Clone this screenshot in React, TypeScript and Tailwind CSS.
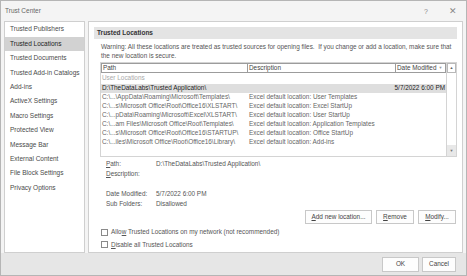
import React from 'react';

const sideItems = [
  'Trusted Publishers',
  'Trusted Locations',
  'Trusted Documents',
  'Trusted Add-in Catalogs',
  'Add-ins',
  'ActiveX Settings',
  'Macro Settings',
  'Protected View',
  'Message Bar',
  'External Content',
  'File Block Settings',
  'Privacy Options',
];

const rows = [
  { path: 'C:\\...\\AppData\\Roaming\\Microsoft\\Templates\\', desc: 'Excel default location: User Templates' },
  { path: 'C:\\...s\\Microsoft Office\\Root\\Office16\\XLSTART\\', desc: 'Excel default location: Excel StartUp' },
  { path: 'C:\\...pData\\Roaming\\Microsoft\\Excel\\XLSTART\\', desc: 'Excel default location: User StartUp' },
  { path: 'C:\\...am Files\\Microsoft Office\\Root\\Templates\\', desc: 'Excel default location: Application Templates' },
  { path: 'C:\\...s\\Microsoft Office\\Root\\Office16\\STARTUP\\', desc: 'Excel default location: Office StartUp' },
  { path: 'C:\\...iles\\Microsoft Office\\Root\\Office16\\Library\\', desc: 'Excel default location: Add-ins' },
];

function Btn({ children, w }: { children: React.ReactNode; w: string }) {
  return (
    <div className={`${w} h-[14px] shrink-0 border border-[#c8c8c8] bg-[#fdfdfd] flex items-center justify-center text-[#444] whitespace-nowrap`}>
      {children}
    </div>
  );
}

function Check({ children }: { children: React.ReactNode }) {
  return (
    <div className="flex items-center h-[12.5px] gap-[3px]">
      <div className="w-[7px] h-[7px] shrink-0 border border-[#8a8a8a] bg-white" />
      <span className="text-[#555] whitespace-nowrap">{children}</span>
    </div>
  );
}

export default function App() {
  return (
    <div
      className="w-[467px] h-[276px] bg-[#ececec] border border-[#b5b5b5] flex flex-col overflow-hidden text-[6.4px] leading-none"
      style={{ fontFamily: '"Liberation Sans", Arial, sans-serif' }}
    >
      {/* Title bar */}
      <div className="h-[20px] shrink-0 bg-[#f4f4f4] flex items-center pl-[4px] pr-[9px] text-[#666]">
        <span className="text-[6.5px] flex-1">Trust Center</span>
        <span className="text-[7px] text-[#888] mr-[21px]">?</span>
        <span className="text-[9px] text-[#888]">✕</span>
      </div>

      {/* Body */}
      <div className="flex flex-1 min-h-0 bg-[#f4f4f4] pl-[3px] pr-[3px] gap-[3px]">
        {/* Sidebar */}
        <div className="w-[81px] shrink-0 bg-white border border-[#cfcfcf] pt-[0.5px] text-[6.5px] text-[#4a4a4a]">
          {sideItems.map((s, i) => (
            <div
              key={s}
              className={`h-[14.4px] flex items-center pl-[5px] whitespace-nowrap ${i === 1 ? 'bg-[#d2d2d2] text-[#222]' : ''}`}
            >
              {s}
            </div>
          ))}
        </div>

        {/* Content */}
        <div className="flex-1 min-w-0 bg-white border border-[#cfcfcf] px-[5px] pt-[5px] flex flex-col">
          <div className="h-[12px] shrink-0 bg-[#e4e4e4] flex items-center pl-[3px] font-bold text-[6.5px] text-[#333]">
            Trusted Locations
          </div>
          <div className="pl-[7px] pt-[4px] text-[#555] leading-[8.5px] whitespace-nowrap">
            <div>Warning: All these locations are treated as trusted sources for opening files.&nbsp; If you change or add a location, make sure that</div>
            <div>the new location is secure.</div>
          </div>

          {/* List */}
          <div className="ml-[6px] mt-[2px] h-[95px] shrink-0 border border-[#d4d4d4] flex">
            <div className="flex-1 min-w-0 flex flex-col">
              <div className="h-[10px] flex text-[#444]">
                <div className="w-[147px] shrink-0 border border-[#9c9c9c] flex items-center pl-[1px]">Path</div>
                <div className="w-[148px] shrink-0 border-y border-r border-[#9c9c9c] flex items-center pl-[1px]">Description</div>
                <div className="flex-1 min-w-0 border-y border-r border-[#9c9c9c] flex items-center pl-[1px] whitespace-nowrap">
                  Date Modified <span className="ml-[2px] text-[4px] text-[#999]">▼</span>
                </div>
              </div>
              <div className="h-[11px] flex items-center pl-[1px] text-[#aaa]">User Locations</div>
              <div className="h-[9px] flex items-center bg-[#dedede] text-[#222]">
                <div className="w-[148px] shrink-0 pl-[1px] whitespace-nowrap">D:\TheDataLabs\Trusted Application\</div>
                <div className="flex-1" />
                <div className="pr-[1px] whitespace-nowrap">5/7/2022 6:00 PM</div>
              </div>
              {rows.map((r) => (
                <div key={r.path} className="h-[9px] flex items-center text-[#666]">
                  <div className="w-[148px] shrink-0 pl-[1px] whitespace-nowrap">{r.path}</div>
                  <div className="flex-1 whitespace-nowrap">{r.desc}</div>
                </div>
              ))}
            </div>
            {/* Scrollbar */}
            <div className="w-[10px] shrink-0 border-l border-[#d4d4d4] flex flex-col">
              <div className="h-[10px] border border-[#b8b8b8] flex items-center justify-center text-[4px] text-[#666]">▲</div>
              <div className="flex-1 bg-white" />
              <div className="h-[11px] bg-[#e8e8e8] flex items-center justify-center text-[4px] text-[#777]">▼</div>
            </div>
          </div>

          {/* Details */}
          <div className="pl-[12px] pt-[2px] text-[#555]">
            <div className="h-[10px] flex items-center">
              <span className="w-[50px]"><u>P</u>ath:</span>
              <span>D:\TheDataLabs\Trusted Application\</span>
            </div>
            <div className="h-[10px] flex items-center">
              <span className="w-[50px]"><u>D</u>escription:</span>
            </div>
            <div className="h-[10px]" />
            <div className="h-[10px] flex items-center">
              <span className="w-[50px]">Date Modified:</span>
              <span>5/7/2022 6:00 PM</span>
            </div>
            <div className="h-[10px] flex items-center">
              <span className="w-[50px]">Sub Folders:</span>
              <span>Disallowed</span>
            </div>
          </div>

          {/* Buttons */}
          <div className="flex justify-end gap-[4px] mt-[1px] mr-[1px]">
            <Btn w="w-[67px]"><span><u>A</u>dd new location...</span></Btn>
            <Btn w="w-[38px]"><span><u>R</u>emove</span></Btn>
            <Btn w="w-[38px]"><span><u>M</u>odify...</span></Btn>
          </div>

          {/* Checkboxes */}
          <div className="pl-[7px] mt-[2px]">
            <Check>Allo<u>w</u> Trusted Locations on my network (not recommended)</Check>
            <Check><u>D</u>isable all Trusted Locations</Check>
          </div>
        </div>
      </div>

      {/* Footer */}
      <div className="h-[22px] shrink-0 bg-[#e6e6e6] flex items-center justify-end gap-[3px] pr-[10px] pt-[1px]">
        <Btn w="w-[37px] h-[15px]">OK</Btn>
        <Btn w="w-[34px] h-[15px]">Cancel</Btn>
      </div>
    </div>
  );
}
